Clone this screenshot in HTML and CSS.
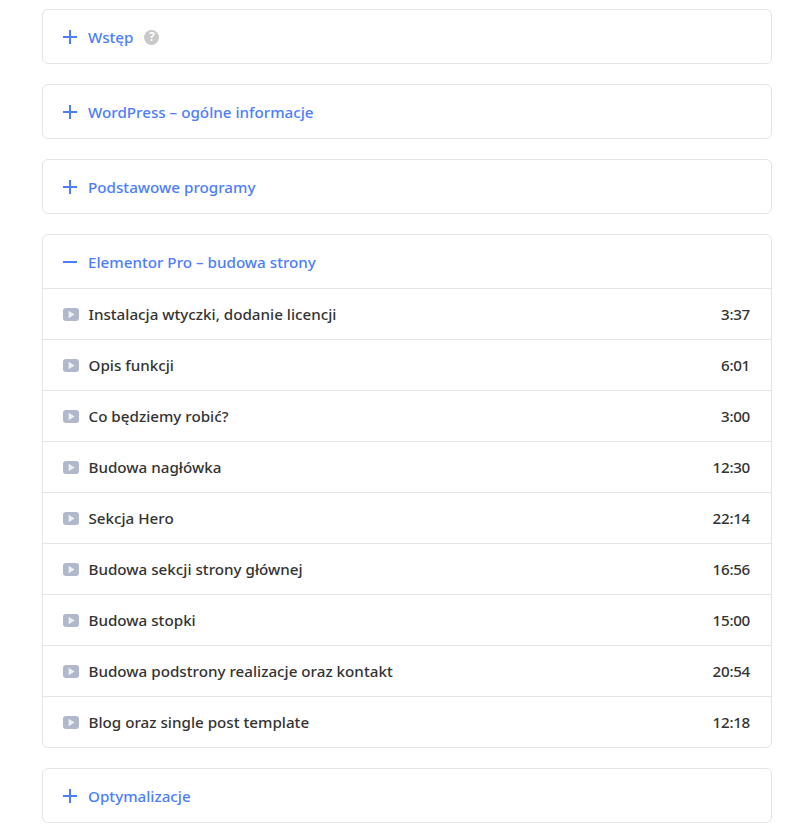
FILE: index.html
```html
<!DOCTYPE html>
<html lang="pl">
<head>
<meta charset="utf-8">
<title>Kurs</title>
<link rel="stylesheet" href="styles.css">
</head>
<body>
<svg class="defs" width="0" height="0" aria-hidden="true">
  <symbol id="plus" viewBox="0 0 16 16"><path d="M8 1v14M1 8h14" fill="none" stroke="currentColor" stroke-width="2"/></symbol>
  <symbol id="minus" viewBox="0 0 16 16"><path d="M1 8h14" fill="none" stroke="currentColor" stroke-width="2"/></symbol>
  <symbol id="play" viewBox="0 0 16 13"><rect width="16" height="13" rx="3" fill="#b2b8cb"/><path d="M5.6 2.8v7.4L11.6 6.5z" fill="#eef0f5"/></symbol>
</svg>
<main class="list">
  <section class="card">
    <div class="head"><svg class="sign"><use href="#plus"/></svg><span>Wstęp</span><span class="help">?</span></div>
  </section>
  <section class="card">
    <div class="head"><svg class="sign"><use href="#plus"/></svg><span>WordPress – ogólne informacje</span></div>
  </section>
  <section class="card">
    <div class="head"><svg class="sign"><use href="#plus"/></svg><span>Podstawowe programy</span></div>
  </section>
  <section class="card">
    <div class="head"><svg class="sign"><use href="#minus"/></svg><span>Elementor Pro – budowa strony</span></div>
    <div class="row"><svg class="play"><use href="#play"/></svg><span class="name">Instalacja wtyczki, dodanie licencji</span><span class="time">3:37</span></div>
    <div class="row"><svg class="play"><use href="#play"/></svg><span class="name">Opis funkcji</span><span class="time">6:01</span></div>
    <div class="row"><svg class="play"><use href="#play"/></svg><span class="name">Co będziemy robić?</span><span class="time">3:00</span></div>
    <div class="row"><svg class="play"><use href="#play"/></svg><span class="name">Budowa nagłówka</span><span class="time">12:30</span></div>
    <div class="row"><svg class="play"><use href="#play"/></svg><span class="name">Sekcja Hero</span><span class="time">22:14</span></div>
    <div class="row"><svg class="play"><use href="#play"/></svg><span class="name">Budowa sekcji strony głównej</span><span class="time">16:56</span></div>
    <div class="row"><svg class="play"><use href="#play"/></svg><span class="name">Budowa stopki</span><span class="time">15:00</span></div>
    <div class="row"><svg class="play"><use href="#play"/></svg><span class="name">Budowa podstrony realizacje oraz kontakt</span><span class="time">20:54</span></div>
    <div class="row"><svg class="play"><use href="#play"/></svg><span class="name">Blog oraz single post template</span><span class="time">12:18</span></div>
  </section>
  <section class="card">
    <div class="head"><svg class="sign"><use href="#plus"/></svg><span>Optymalizacje</span></div>
  </section>
</main>
</body>
</html>
```
FILE: styles.css
```css
html, body { margin: 0; padding: 0; background: #fff; }
body { font-family: "Noto Sans", sans-serif; font-size: 15.2px; font-weight: 500; color: #333; }
.defs { position: absolute; }
.list { display: flex; flex-direction: column; gap: 20px; padding: 9px 40px 0 42px; }
.card { border: 1px solid #e0e6e8; border-radius: 6px; }
.head { display: flex; align-items: center; height: 53px; padding-left: 19px; color: #4c7dff; }
.sign { width: 16px; height: 16px; margin-right: 10px; }
.help {
  display: flex; align-items: center; justify-content: center;
  width: 15px; height: 15px; margin: 1px 0 0 11px; border-radius: 50%;
  background: #c8c8c8; color: #fff; font-size: 12px; font-weight: 700; line-height: 1;
}
.row { display: flex; align-items: center; height: 50px; padding: 0 21px 0 19.5px; border-top: 1px solid #e0e6e8; }
.play { width: 16px; height: 13px; margin-right: 10px; flex: none; }
.name { flex: 1; }
.time { letter-spacing: -0.3px; }
```
